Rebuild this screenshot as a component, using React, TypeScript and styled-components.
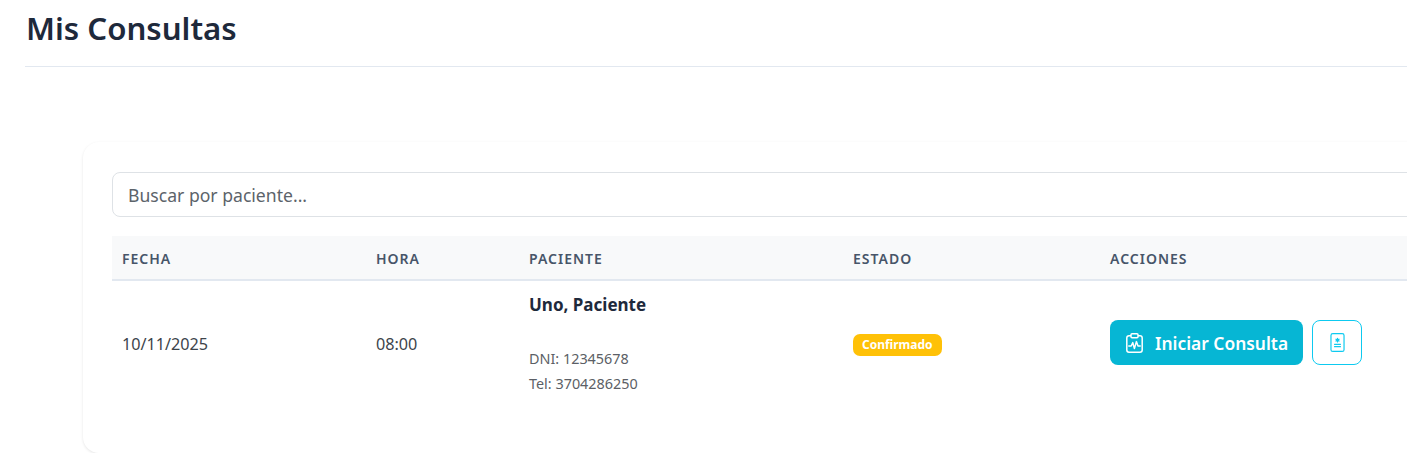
import React from 'react';
import styled, { createGlobalStyle } from 'styled-components';
import { BsFileMedical } from 'react-icons/bs';

const GlobalStyle = createGlobalStyle`
  html, body {
    margin: 0;
    padding: 0;
    background: #fff;
    overflow: hidden;
    font-family: "Noto Sans", "Open Sans", sans-serif;
  }
`;

const Page = styled.div`
  width: 1600px;
  padding-left: 25px;
  box-sizing: border-box;
`;

const Header = styled.div`
  height: 67px;
  box-sizing: border-box;
  border-bottom: 1px solid #e2e8f0;
  margin-bottom: 75px;
`;

const Title = styled.h1`
  margin: 0;
  padding-left: 1px;
  font-size: 31.2px;
  line-height: 57px;
  font-weight: 600;
  color: #1e293b;
`;

const Card = styled.div`
  margin-left: 58px;
  height: 311px;
  box-sizing: border-box;
  padding: 30px 29px;
  background: #fff;
  border-radius: 16px;
  box-shadow: 0 1px 3px rgba(0, 0, 0, 0.1);
`;

const SearchInput = styled.input`
  display: block;
  width: 100%;
  height: 45px;
  box-sizing: border-box;
  padding: 0 15px;
  margin-bottom: 19px;
  border: 1px solid #dee2e6;
  border-radius: 8px;
  font-family: inherit;
  font-size: 17.6px;
  color: #212529;

  &::placeholder {
    color: #5c636a;
    opacity: 1;
  }
`;

const Table = styled.table`
  width: 100%;
  table-layout: fixed;
  border-collapse: collapse;
`;

const HeadCell = styled.th<{ $width?: number }>`
  width: ${props => (props.$width ? `${props.$width}px` : 'auto')};
  height: 44px;
  padding: 1px 10px 0;
  box-sizing: border-box;
  background: #f8f9fa;
  border-bottom: 2px solid #e2e8f0;
  text-align: left;
  font-size: 14px;
  font-weight: 600;
  letter-spacing: 1px;
  color: #475569;
`;

const Cell = styled.td`
  height: 126px;
  padding: 0 10px;
  font-size: 16.2px;
  color: #3d444b;
  vertical-align: middle;
`;

const PatientName = styled.div`
  font-size: 17px;
  line-height: 24px;
  font-weight: 700;
  color: #1e293b;
  margin-bottom: 29px;
`;

const PatientInfo = styled.div`
  font-size: 14.4px;
  line-height: 25px;
  color: #5c5f66;
`;

const Badge = styled.span`
  display: inline-block;
  padding: 0 9px;
  height: 22px;
  line-height: 22px;
  border-radius: 7px;
  background: #ffc107;
  color: #fff;
  font-size: 12px;
  font-weight: 700;
`;

const Actions = styled.div`
  display: flex;
  align-items: center;
  gap: 9px;
  padding-bottom: 4px;
`;

const StartButton = styled.button`
  display: flex;
  align-items: center;
  gap: 12px;
  height: 45px;
  padding: 1px 15px 0 16px;
  border: none;
  border-radius: 8px;
  background: #06b6d4;
  color: #fff;
  font-family: inherit;
  font-size: 17.4px;
  font-weight: 600;
  white-space: nowrap;
`;

const IconButton = styled.button`
  display: flex;
  align-items: center;
  justify-content: center;
  width: 50px;
  height: 45px;
  padding: 0;
  border: 1px solid #0dcaf0;
  border-radius: 8px;
  background: #fff;
  color: #0dcaf0;
`;

const ClipboardPulseIcon = () => (
  <svg width="17" height="20" viewBox="0 0 17 20" fill="none" stroke="currentColor" strokeWidth="1.5" strokeLinejoin="round" strokeLinecap="round">
    <rect x="0.8" y="2.8" width="15.4" height="16.4" rx="2.2" />
    <rect x="5" y="0.8" width="7" height="4" rx="1" fill="#06b6d4" />
    <polyline points="2.8,13 5.2,13 6.8,9.6 8.4,15.6 10.4,8.6 12,13 14.2,13" />
  </svg>
);

const columns = [
  { label: 'FECHA', width: 254 },
  { label: 'HORA', width: 153 },
  { label: 'PACIENTE', width: 324 },
  { label: 'ESTADO', width: 257 },
  { label: 'ACCIONES' },
];

const App: React.FC = () => {
  return (
    <Page>
      <GlobalStyle />
      <Header>
        <Title>Mis Consultas</Title>
      </Header>
      <Card>
        <SearchInput type="text" placeholder="Buscar por paciente..." />
        <Table>
          <thead>
            <tr>
              {columns.map(col => (
                <HeadCell key={col.label} $width={col.width}>
                  {col.label}
                </HeadCell>
              ))}
            </tr>
          </thead>
          <tbody>
            <tr>
              <Cell>10/11/2025</Cell>
              <Cell>08:00</Cell>
              <Cell>
                <PatientName>Uno, Paciente</PatientName>
                <PatientInfo>DNI: 12345678</PatientInfo>
                <PatientInfo>Tel: 3704286250</PatientInfo>
              </Cell>
              <Cell>
                <Badge>Confirmado</Badge>
              </Cell>
              <Cell>
                <Actions>
                  <StartButton>
                    <ClipboardPulseIcon />
                    Iniciar Consulta
                  </StartButton>
                  <IconButton>
                    <BsFileMedical size={19} />
                  </IconButton>
                </Actions>
              </Cell>
            </tr>
          </tbody>
        </Table>
      </Card>
    </Page>
  );
};

export default App;
